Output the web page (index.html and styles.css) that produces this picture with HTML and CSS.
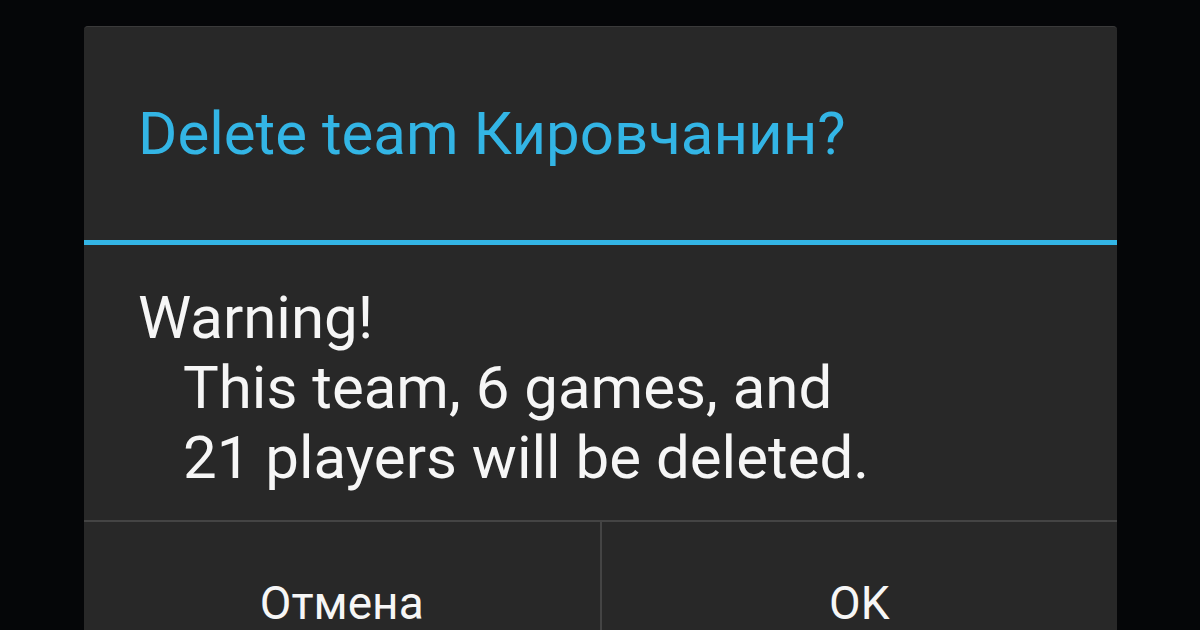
FILE: index.html
```html
<!DOCTYPE html>
<html lang="en">
  <head>
    <meta charset="UTF-8" />
    <meta name="viewport" content="width=device-width, initial-scale=1.0" />
    <title>Delete team</title>
    <link rel="stylesheet" href="styles.css">
  </head>
  <body>
    <div class="dialog">
      <!-- Title -->
      <div class="dialog-title">
        <h1>Delete team Кировчанин?</h1>
      </div>
      <div class="title-bar"></div>

      <!-- Message -->
      <div class="dialog-body">
        <p class="line">Warning!</p>
        <p class="line indent">This team, 6 games, and</p>
        <p class="line indent">21 players will be deleted.</p>
      </div>

      <!-- Buttons -->
      <div class="dialog-buttons">
        <button class="btn">Отмена</button>
        <button class="btn">OK</button>
      </div>
    </div>
  </body>
</html>
```

FILE: styles.css
```css
/* Page */
body {
  margin: 0;
  background-color: #050608;
  font-family: 'Roboto', 'Noto Sans', sans-serif;
  height: 630px;
  overflow: hidden;
}

/* Dialog box */
.dialog {
  margin: 26px 0 0 84px;
  width: 1033px;
  height: 604px;
  background-color: #282828;
  border-top: 1px solid #3a3a3a;
  border-radius: 4px 4px 0 0;
  box-sizing: border-box;
  display: flex;
  flex-direction: column;
}

.dialog-title {
  height: 213px;
  padding-left: 54px;
  display: flex;
  align-items: center;
}

h1 {
  margin: 0;
  color: #33b5e5;
  font-size: 60px;
  font-weight: 400;
  line-height: 1;
}

.title-bar {
  height: 5px;
  background-color: #33b5e5;
}

/* Message text */
.dialog-body {
  height: 277px;
  padding: 38px 0 0 54px;
  box-sizing: border-box;
  border-bottom: 2px solid #444;
}

.line {
  margin: 0;
  color: #f6f6f6;
  font-size: 60px;
  line-height: 70px;
}

.indent {
  padding-left: 45px;
}

/* Button row */
.dialog-buttons {
  display: flex;
  flex: 1;
}

.btn {
  flex: 1;
  background: none;
  border: none;
  color: #f6f6f6;
  font-family: 'Roboto', 'Noto Sans', sans-serif;
  font-size: 46px;
  padding: 54px 0 0;
  display: flex;
  justify-content: center;
  align-items: flex-start;
}

.btn + .btn {
  border-left: 2px solid #444;
}
```
